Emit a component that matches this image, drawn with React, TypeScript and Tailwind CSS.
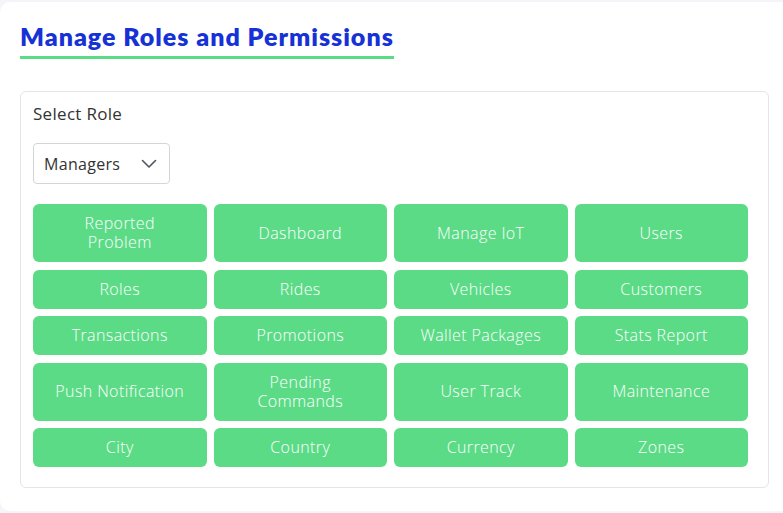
import React from "react";

const items: string[] = [
  "Reported Problem", "Dashboard", "Manage IoT", "Users",
  "Roles", "Rides", "Vehicles", "Customers",
  "Transactions", "Promotions", "Wallet Packages", "Stats Report",
  "Push Notification", "Pending Commands", "User Track", "Maintenance",
  "City", "Country", "Currency", "Zones",
];

const twoLine: Record<string, [string, string]> = {
  "Reported Problem": ["Reported", "Problem"],
  "Pending Commands": ["Pending", "Commands"],
};

export default function App() {
  return (
    <div className="w-[783px] h-[513px] bg-[#f3f5f8] pt-[2px] overflow-hidden" style={{ fontFamily: "'Open Sans', sans-serif" }}>
      <div className="bg-white rounded-tl-[10px] rounded-bl-[10px] h-[509px] w-[800px] pl-5 pt-[19px]">
        <div className="inline-block">
          <h1 className="text-[25px] leading-[30px] font-extrabold text-[#1631d6] tracking-[1px]" style={{ fontFamily: "Lato, sans-serif" }}>
            Manage Roles and Permissions
          </h1>
          <div className="h-[3px] bg-[#5cdb87] mt-[5px]" />
        </div>
        <div className="mt-[32px] w-[749px] border border-[#e3e5e8] rounded-[6px] pl-3 pr-5 pt-[12px] pb-[20px]">
          <div className="text-[17px] leading-[20px] text-[#333] tracking-[0.3px]">Select Role</div>
          <div className="mt-[19px] w-[137px] h-[41px] border border-[#d2d5da] rounded-[4px] flex items-center justify-between pl-[10px] pr-[12px]">
            <span className="text-[16px] text-[#333] tracking-[0.3px]">Managers</span>
            <svg width="16" height="10" viewBox="0 0 16 10" fill="none">
              <path d="M1.5 1.5 L8 8 L14.5 1.5" stroke="#4b5563" strokeWidth="1.6" strokeLinecap="round" strokeLinejoin="round" />
            </svg>
          </div>
          <div className="mt-[20px] grid grid-cols-4 gap-x-[7px] gap-y-[7.5px]">
            {items.map((it) => (
              <div key={it} className="bg-[#5cdb87] rounded-[6px] py-[10px] text-white text-[16px] leading-[19px] font-light tracking-[0.4px] text-center flex flex-col items-center justify-center">
                {twoLine[it] ? (
                  <>
                    <span>{twoLine[it][0]}</span>
                    <span>{twoLine[it][1]}</span>
                  </>
                ) : (
                  <span>{it}</span>
                )}
              </div>
            ))}
          </div>
        </div>
      </div>
    </div>
  );
}
